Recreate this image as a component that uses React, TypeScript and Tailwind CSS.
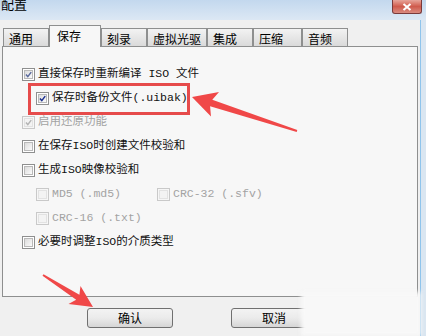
import React from "react";

type BoxState = "checked" | "checkedDim" | "checkedDisabled" | "empty" | "disabled";

function CheckBox({ state }: { state: BoxState }) {
  const disabled = state === "disabled" || state === "checkedDisabled";
  const checked = state === "checked" || state === "checkedDim" || state === "checkedDisabled";
  const stroke =
    state === "checked" ? "#1b2f8f" : state === "checkedDim" ? "#5a6a9c" : "#b4b4b4";
  return (
    <div
      className={
        "w-[13px] h-[13px] shrink-0 border p-px " +
        (disabled ? "border-[#c9c9c9] bg-[#f6f6f6]" : "border-[#8e8f8f] bg-white")
      }
    >
      <div
        className={
          "w-full h-full border relative " +
          (disabled
            ? "border-[#e2e2e2] bg-[#f3f3f3]"
            : "border-[#b9b9b9] bg-gradient-to-br from-[#dcdcdc] to-[#fbfbfb]")
        }
      >
        {checked && (
          <svg viewBox="0 0 9 9" className="absolute inset-0 w-full h-full">
            <path d="M1.2 4.6 L3.6 7.2 L8 1.4" fill="none" stroke={stroke} strokeWidth="1.9" />
          </svg>
        )}
      </div>
    </div>
  );
}

function Row({
  state,
  label,
  indent = false,
  dim = false,
}: {
  state: BoxState;
  label: string;
  indent?: boolean;
  dim?: boolean;
}) {
  return (
    <div className={"h-[24px] flex items-center gap-[3px] " + (indent ? "pl-[14px]" : "")}>
      <CheckBox state={state} />
      <span className={"whitespace-pre leading-none " + (dim ? "text-[#a3a3a3]" : "text-[#111]")}>
        {label}
      </span>
    </div>
  );
}

const tabs = [
  { name: "通用", w: "w-[46px]" },
  { name: "保存", w: "w-[52px]", active: true },
  { name: "刻录", w: "w-[46px]" },
  { name: "虚拟光驱", w: "w-[60px]" },
  { name: "集成", w: "w-[46px]" },
  { name: "压缩", w: "w-[49px]" },
  { name: "音频", w: "w-[46px]" },
];

export default function App() {
  return (
    <div className="w-[426px] h-[336px] relative overflow-hidden flex flex-col bg-[#d5e4f2] font-['Noto_Sans_CJK_SC',sans-serif] text-[12px]">
      {/* title bar */}
      <div className="h-[20px] shrink-0 relative bg-gradient-to-b from-[#c3d8ee] to-[#dce8f4]">
        <span className="absolute left-[1px] top-[-4px] text-[13px] text-black leading-[16px]">配置</span>
        <div className="absolute right-[4px] top-0 w-[30px] h-[14px] rounded-b-[3px] border border-t-0 border-[#7a3a3a] bg-gradient-to-b from-[#e6a49a] via-[#cf5a4c] to-[#d98b80] flex items-center justify-center">
          <svg viewBox="0 0 10 8" className="w-[10px] h-[8px]">
            <path d="M1.5 1 L8.5 7 M8.5 1 L1.5 7" stroke="#fff" strokeWidth="2" />
          </svg>
        </div>
      </div>

      <div className="flex-1 flex">
        {/* client area */}
        <div className="w-[420px] bg-[#f0f0f0] flex flex-col">
          <div className="flex items-end pl-[3px] pt-[4px] h-[26px] relative z-10">
            {tabs.map((t) =>
              t.active ? (
                <div
                  key={t.name}
                  className={t.w + " h-[22px] -mb-px border border-b-0 border-[#8e8f8f] bg-[#f7f7f7] pl-[7px] pt-[3px] leading-[14px] text-black"}
                >
                  {t.name}
                </div>
              ) : (
                <div
                  key={t.name}
                  className={t.w + " h-[18px] border border-b-0 border-[#8e8f8f] bg-gradient-to-b from-[#f3f3f3] to-[#dadada] pl-[5px] pt-[3px] leading-[14px] text-black"}
                >
                  {t.name}
                </div>
              )
            )}
          </div>

          <div className="mx-[2px] h-[251px] border border-[#8e8f8f] bg-[#f7f7f7] pt-[15px] pl-[19px] text-[11.5px] font-['Liberation_Mono','Noto_Sans_CJK_SC',monospace]">
            <Row state="checkedDim" label="直接保存时重新编译 ISO 文件" />
            <Row state="checked" label="保存时备份文件(.uibak)" indent />
            <Row state="checkedDisabled" label="启用还原功能" dim />
            <Row state="empty" label="在保存ISO时创建文件校验和" />
            <Row state="empty" label="生成ISO映像校验和" />
            <div className="flex">
              <div className="w-[135px]">
                <Row state="disabled" label="MD5 (.md5)" indent dim />
              </div>
              <Row state="disabled" label="CRC-32 (.sfv)" dim />
            </div>
            <Row state="disabled" label="CRC-16 (.txt)" indent dim />
            <Row state="empty" label="必要时调整ISO的介质类型" />
          </div>

          <div className="flex pl-[87px] gap-[58px] mt-[11px]">
            <button className="w-[86px] h-[20px] rounded-[3px] border border-[#707070] bg-gradient-to-b from-[#f3f3f3] via-[#ebebeb] to-[#d6d6d6] text-black leading-none">
              确认
            </button>
            <button className="w-[86px] h-[20px] rounded-[3px] border border-[#707070] bg-gradient-to-b from-[#f3f3f3] via-[#ebebeb] to-[#d6d6d6] text-black leading-none">
              取消
            </button>
          </div>
        </div>
        {/* window frame */}
        <div className="w-px bg-[#8ec4ec]" />
        <div className="flex-1 bg-[#dae6f1]" />
      </div>

      {/* annotation: red box */}
      <div className="absolute left-[28px] top-[83px] w-[162px] h-[32px] border-[3px] border-[#e64b4b]" />

      {/* watermark blur */}
      <div className="absolute left-[301px] top-[292px] w-[120px] h-[44px] bg-[#f8f8f8] blur-[2px]" />

      {/* annotation arrows */}
      <svg className="absolute inset-0 pointer-events-none" width="426" height="336" viewBox="0 0 426 336">
        <polygon
          points="192,97 219,92 212.3,99.7 297.3,130 296.7,132 210.1,106.3 211,116.5"
          fill="#f04848"
        />
        <polygon
          points="93,307 80.5,286 79.4,294.8 43.5,274.2 42.5,275.8 76.2,299.8 68.5,304"
          fill="#f04848"
        />
      </svg>
    </div>
  );
}
